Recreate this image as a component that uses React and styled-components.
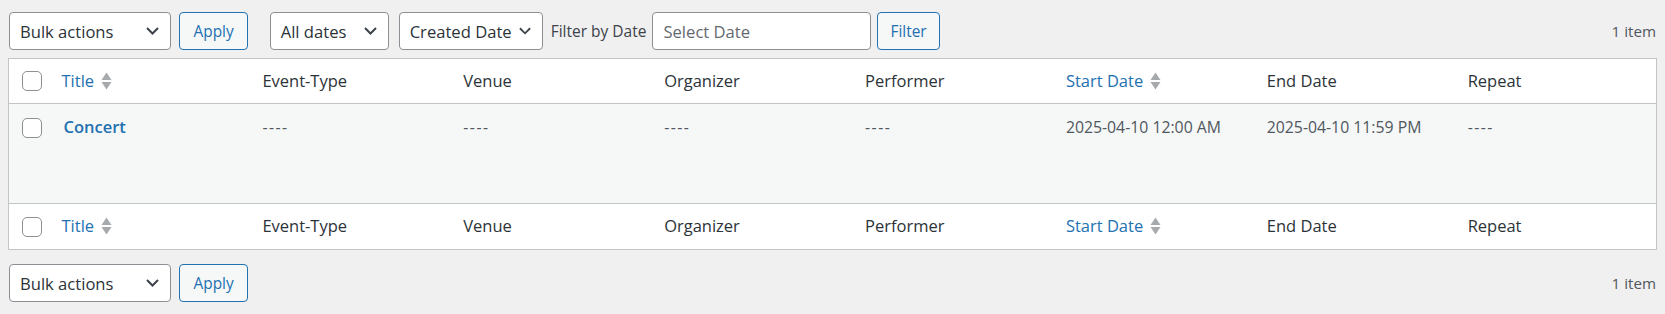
import React from 'react';
import styled, { createGlobalStyle } from 'styled-components';

const GlobalStyle = createGlobalStyle`
  html, body { margin: 0; padding: 0; background: #f0f0f1; }
  body { font-family: "Open Sans", "Noto Sans", sans-serif; color: #3c434a; }
  * { box-sizing: border-box; }
`;

const Page = styled.div`
  padding: 12px 8px 0 8px;
`;

const TableNav = styled.div`
  display: flex;
  align-items: center;
  height: 38px;
  margin: ${p => (p.$bottom ? '14px 0 0' : '0 0 8px')};
`;

const Actions = styled.div`
  display: flex;
  align-items: center;
  gap: ${p => p.$gap}px;
  margin-left: ${p => p.$ml || 0}px;
  margin-right: ${p => p.$mr || 0}px;
`;

const SelectBox = styled.div`
  display: flex;
  align-items: center;
  justify-content: space-between;
  gap: 7px;
  width: ${p => p.$w}px;
  height: 38px;
  padding: 0 11px 0 10px;
  background: #fff;
  border: 1px solid #8c8f94;
  border-radius: 4px;
  font-size: 16.6px;
  color: #2c3338;
  white-space: nowrap;
`;

const Button = styled.button`
  height: 38px;
  padding: 0 ${p => p.$px || 13.5}px;
  background: #f6f7f7;
  border: 1px solid #2271b1;
  border-radius: 4px;
  color: #2271b1;
  font-family: inherit;
  font-size: 15.4px;
`;

const Label = styled.span`
  font-size: 15.5px;
  color: #3c434a;
  white-space: nowrap;
`;

const DateInput = styled.input`
  width: 219px;
  height: 38px;
  padding: 0 10px;
  background: #fff;
  border: 1px solid #8c8f94;
  border-radius: 4px;
  font-family: inherit;
  font-size: 16.6px;
  color: #2c3338;
  &::placeholder { color: #646970; }
`;

const Count = styled.span`
  margin-left: auto;
  margin-right: 1px;
  font-size: 15.2px;
  color: #50575e;
`;

const Table = styled.table`
  width: 100%;
  table-layout: fixed;
  border-collapse: separate;
  border-spacing: 0;
  background: #fff;
  border: 1px solid #c3c4c7;
`;

const CbCol = styled.col`
  width: 40px;
`;

const HeadCell = styled.th`
  padding: ${p => (p.$foot ? '10px 12.5px 11px' : '10px 12.5px')};
  line-height: 24px;
  text-align: left;
  font-weight: 400;
  font-size: 16.5px;
  color: #2c3338;
  vertical-align: middle;
  white-space: nowrap;
  border-bottom: ${p => (p.$foot ? '0' : '1px solid #c3c4c7')};
  border-top: ${p => (p.$foot ? '1px solid #c3c4c7' : '0')};
`;

const CheckHeadCell = styled(HeadCell)`
  padding: 0 0 0 12.5px;
`;

const SortLink = styled.a`
  display: inline-flex;
  align-items: center;
  gap: 7px;
  color: #2271b1;
  text-decoration: none;
`;

const BodyRow = styled.tr`
  background: #f6f7f7;
`;

const Cell = styled.td`
  padding: 10px 12.5px 63px;
  line-height: 26px;
  font-size: 15.8px;
  color: #50575e;
  vertical-align: top;
  white-space: nowrap;
`;

const CheckCell = styled.td`
  padding: 14px 0 0 12.5px;
  vertical-align: top;
`;

const Checkbox = styled.input.attrs({ type: 'checkbox' })`
  appearance: none;
  display: block;
  margin: 0;
  width: 20px;
  height: 20px;
  background: #fff;
  border: 1px solid #8c8f94;
  border-radius: 5px;
`;

const RowTitle = styled.a`
  padding-left: 2px;
  font-size: 16.5px;
  font-weight: 600;
  color: #2271b1;
  text-decoration: none;
`;

const Dash = styled.span`
  letter-spacing: 1.5px;
`;

const Chevron = () => (
  <svg width="13" height="8" viewBox="0 0 13 8" fill="none">
    <polyline points="1,1 6.5,6.5 12,1" stroke="#3c434a" strokeWidth="2" strokeLinejoin="miter" />
  </svg>
);

const SortIcon = () => (
  <svg width="11" height="18" viewBox="0 0 11 18">
    <polygon points="0.5,8 5.5,0.5 10.5,8" fill="#a7aaad" />
    <polygon points="0.5,10 5.5,17.5 10.5,10" fill="#a7aaad" />
  </svg>
);

const columns = [
  { label: 'Title', sortable: true },
  { label: 'Event-Type' },
  { label: 'Venue' },
  { label: 'Organizer' },
  { label: 'Performer' },
  { label: 'Start Date', sortable: true },
  { label: 'End Date' },
  { label: 'Repeat' },
];

const HeaderRow = ({ foot }) => (
  <tr>
    <CheckHeadCell $foot={foot}>
      <Checkbox />
    </CheckHeadCell>
    {columns.map(c => (
      <HeadCell key={c.label} $foot={foot}>
        {c.sortable ? (
          <SortLink href="#">
            <span>{c.label}</span>
            <SortIcon />
          </SortLink>
        ) : (
          c.label
        )}
      </HeadCell>
    ))}
  </tr>
);

const BulkActions = ({ mr }) => (
  <Actions $gap={8} $ml={1} $mr={mr}>
    <SelectBox $w={162}>
      <span>Bulk actions</span>
      <Chevron />
    </SelectBox>
    <Button>Apply</Button>
  </Actions>
);

export default function App() {
  return (
    <>
      <GlobalStyle />
      <Page>
        <TableNav>
          <BulkActions mr={21.5} />
          <Actions $gap={10}>
            <SelectBox $w={119}>
              <span>All dates</span>
              <Chevron />
            </SelectBox>
            <SelectBox $w={144}>
              <span>Created Date</span>
              <Chevron />
            </SelectBox>
          </Actions>
          <Actions $gap={6} $ml={8}>
            <Label>Filter by Date</Label>
            <DateInput placeholder="Select Date" readOnly />
            <Button $px={12}>Filter</Button>
          </Actions>
          <Count>1 item</Count>
        </TableNav>
        <Table>
          <colgroup>
            <CbCol />
            {columns.map(c => <col key={c.label} />)}
          </colgroup>
          <thead>
            <HeaderRow />
          </thead>
          <tbody>
            <BodyRow>
              <CheckCell>
                <Checkbox />
              </CheckCell>
              <Cell>
                <RowTitle href="#">Concert</RowTitle>
              </Cell>
              <Cell><Dash>----</Dash></Cell>
              <Cell><Dash>----</Dash></Cell>
              <Cell><Dash>----</Dash></Cell>
              <Cell><Dash>----</Dash></Cell>
              <Cell>2025-04-10 12:00 AM</Cell>
              <Cell>2025-04-10 11:59 PM</Cell>
              <Cell><Dash>----</Dash></Cell>
            </BodyRow>
          </tbody>
          <tfoot>
            <HeaderRow foot />
          </tfoot>
        </Table>
        <TableNav $bottom>
          <BulkActions />
          <Count>1 item</Count>
        </TableNav>
      </Page>
    </>
  );
}
